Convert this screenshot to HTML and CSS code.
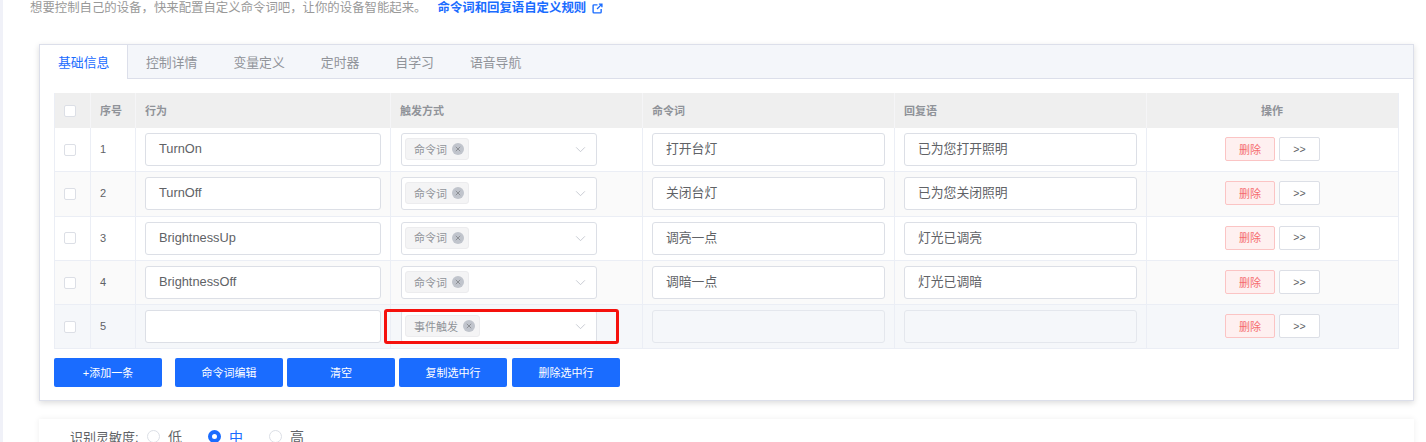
FILE: index.html
```html
<!DOCTYPE html>
<html lang="zh">
<head>
<meta charset="utf-8">
<title>自定义命令词</title>
<link rel="stylesheet" href="styles.css">
</head>
<body>
<main class="page">
  <p class="intro">想要控制自己的设备，快来配置自定义命令词吧，让你的设备智能起来。<a class="rule-link">命令词和回复语自定义规则<svg class="ext" viewBox="0 0 12 12" width="12" height="12"><path d="M6 2H2.2A1 1 0 0 0 1.2 3v6.8a1 1 0 0 0 1 1H9a1 1 0 0 0 1-1V6.5" fill="none" stroke="currentColor" stroke-width="1.5"/><path d="M5.5 6.5 10.5 1.5M7.5 1.2h3.3v3.3" fill="none" stroke="currentColor" stroke-width="1.5"/></svg></a></p>
  <section class="card">
    <nav class="tabs">
      <span class="tab active">基础信息</span>
      <span class="tab">控制详情</span>
      <span class="tab">变量定义</span>
      <span class="tab">定时器</span>
      <span class="tab">自学习</span>
      <span class="tab">语音导航</span>
    </nav>
    <div class="card-body">
      <div class="grid">
        <div class="row head">
          <div class="cell"><span class="check"></span></div>
          <div class="cell">序号</div>
          <div class="cell">行为</div>
          <div class="cell">触发方式</div>
          <div class="cell">命令词</div>
          <div class="cell">回复语</div>
          <div class="cell center">操作</div>
        </div>
        <div class="row">
          <div class="cell"><span class="check"></span></div>
          <div class="cell num">1</div>
          <div class="cell"><div class="input">TurnOn</div></div>
          <div class="cell"><div class="select"><span class="tag">命令词<i class="x"><svg viewBox="0 0 12 12"><path d="M3.8 3.8l4.4 4.4M8.2 3.8l-4.4 4.4"/></svg></i></span><svg class="arrow" viewBox="0 0 12 8"><path d="M1 1.5l5 5 5-5"/></svg></div></div>
          <div class="cell"><div class="input">打开台灯</div></div>
          <div class="cell"><div class="input">已为您打开照明</div></div>
          <div class="cell center"><button class="del">删除</button><button class="more">&gt;&gt;</button></div>
        </div>
        <div class="row alt">
          <div class="cell"><span class="check"></span></div>
          <div class="cell num">2</div>
          <div class="cell"><div class="input">TurnOff</div></div>
          <div class="cell"><div class="select"><span class="tag">命令词<i class="x"><svg viewBox="0 0 12 12"><path d="M3.8 3.8l4.4 4.4M8.2 3.8l-4.4 4.4"/></svg></i></span><svg class="arrow" viewBox="0 0 12 8"><path d="M1 1.5l5 5 5-5"/></svg></div></div>
          <div class="cell"><div class="input">关闭台灯</div></div>
          <div class="cell"><div class="input">已为您关闭照明</div></div>
          <div class="cell center"><button class="del">删除</button><button class="more">&gt;&gt;</button></div>
        </div>
        <div class="row">
          <div class="cell"><span class="check"></span></div>
          <div class="cell num">3</div>
          <div class="cell"><div class="input">BrightnessUp</div></div>
          <div class="cell"><div class="select"><span class="tag">命令词<i class="x"><svg viewBox="0 0 12 12"><path d="M3.8 3.8l4.4 4.4M8.2 3.8l-4.4 4.4"/></svg></i></span><svg class="arrow" viewBox="0 0 12 8"><path d="M1 1.5l5 5 5-5"/></svg></div></div>
          <div class="cell"><div class="input">调亮一点</div></div>
          <div class="cell"><div class="input">灯光已调亮</div></div>
          <div class="cell center"><button class="del">删除</button><button class="more">&gt;&gt;</button></div>
        </div>
        <div class="row alt">
          <div class="cell"><span class="check"></span></div>
          <div class="cell num">4</div>
          <div class="cell"><div class="input">BrightnessOff</div></div>
          <div class="cell"><div class="select"><span class="tag">命令词<i class="x"><svg viewBox="0 0 12 12"><path d="M3.8 3.8l4.4 4.4M8.2 3.8l-4.4 4.4"/></svg></i></span><svg class="arrow" viewBox="0 0 12 8"><path d="M1 1.5l5 5 5-5"/></svg></div></div>
          <div class="cell"><div class="input">调暗一点</div></div>
          <div class="cell"><div class="input">灯光已调暗</div></div>
          <div class="cell center"><button class="del">删除</button><button class="more">&gt;&gt;</button></div>
        </div>
        <div class="row hover">
          <div class="cell"><span class="check"></span></div>
          <div class="cell num">5</div>
          <div class="cell"><div class="input"></div></div>
          <div class="cell"><div class="select"><span class="tag">事件触发<i class="x"><svg viewBox="0 0 12 12"><path d="M3.8 3.8l4.4 4.4M8.2 3.8l-4.4 4.4"/></svg></i></span><svg class="arrow" viewBox="0 0 12 8"><path d="M1 1.5l5 5 5-5"/></svg></div><span class="redbox"></span></div>
          <div class="cell"><div class="input disabled"></div></div>
          <div class="cell"><div class="input disabled"></div></div>
          <div class="cell center"><button class="del">删除</button><button class="more">&gt;&gt;</button></div>
        </div>
      </div>
      <div class="actions">
        <button class="primary first">+添加一条</button>
        <button class="primary">命令词编辑</button>
        <button class="primary">清空</button>
        <button class="primary third">复制选中行</button>
        <button class="primary">删除选中行</button>
      </div>
    </div>
  </section>
  <section class="sens">
    <span class="sens-label">识别灵敏度:</span>
    <label class="radio"><i class="dot"></i>低</label>
    <label class="radio on"><i class="dot"></i>中</label>
    <label class="radio"><i class="dot"></i>高</label>
  </section>
</main>
</body>
</html>
```
FILE: styles.css
```css
* { box-sizing: border-box; }
html, body { margin: 0; height: 442px; overflow: hidden; background: #fff; }
body { font-family: "Liberation Sans", "Noto Sans CJK SC", sans-serif; color: #606266; }
.page { width: 1426px; height: 442px; border-left: 3px solid #f0f1f8; padding: 0 0 0 36px; overflow: hidden; }
.intro { margin: 0 0 0 -9px; height: 44px; padding-top: 1px; font-size: 12.4px; line-height: 15px; color: #999; white-space: nowrap; }
.rule-link { margin-left: 11px; color: #1a6cff; font-weight: 700; }
.ext { margin-left: 6px; vertical-align: -2px; width: 11px; height: 11px; }
.card { width: 1375px; height: 357px; background: #fff; border: 1px solid #dcdfea; box-shadow: 0 2px 6px rgba(0,0,0,.14); }
.tabs { display: flex; height: 34px; background: #f4f6fa; border-bottom: 1px solid #dcdfea; }
.tab { height: 34px; padding: 0 18px; font-size: 12.85px; line-height: 36px; color: #909399; }
.tab.active { width: 88px; padding: 0 0 0 18px; background: #fff; color: #1a6cff; border-right: 1px solid #dcdfea; }
.card-body { padding: 14px 14px 0; }
.grid { width: 1345px; border-left: 1px solid #ebeef5; border-right: 1px solid #ebeef5; }
.row { display: grid; grid-template-columns: 36px 45px 255px 252px 252px 252px 1fr; height: 44.3px; border-bottom: 1px solid #ebeef5; align-items: stretch; }
.row.head { height: 35px; background: #efefef; border-bottom: 0; font-size: 10.5px; font-weight: 700; color: #909399; }
.row.alt { background: #fafafa; }
.row.hover { background: #f5f7fa; }
.cell { position: relative; display: flex; align-items: center; padding: 0 9px; border-right: 1px solid #ebeef5; font-size: 11px; min-width: 0; }
.cell:last-child { border-right: 0; }
.cell.center { justify-content: center; }
.head .cell { border-right-color: #f5f5f7; padding: 0 10px 2px 9px; }
.head .cell:first-child, .row .cell:first-child { padding-bottom: 0; }
.num { color: #606266; padding-bottom: 1px; }
.check { display: block; width: 12px; height: 12px; background: #fff; border: 1px solid #dcdfe6; border-radius: 2px; }
.input { width: 100%; height: 33px; padding: 0 13px; background: #fff; border: 1px solid #dcdfe6; border-radius: 3px; font-size: 12.8px; line-height: 30px; color: #606266; white-space: nowrap; }
.input.disabled { background: #f5f7fa; border-color: #e4e7ed; }
.select { display: flex; align-items: center; justify-content: space-between; width: 196px; height: 33px; margin-left: 1px; padding: 0 10px 0 3px; background: #fff; border: 1px solid #dcdfe6; border-radius: 3px; }
.tag { display: flex; align-items: center; height: 22px; margin-bottom: 1px; padding: 0 4px 1px 8px; background: #f4f4f5; border: 1px solid #ececee; border-radius: 3px; font-size: 11px; color: #909399; white-space: nowrap; }
.x { display: block; width: 12px; height: 12px; margin: 1px 0 0 5px; border-radius: 50%; background: #c0c4cc; }
.x svg { display: block; width: 12px; height: 12px; fill: none; stroke: #8d9095; stroke-width: 1; }
.arrow { width: 11px; height: 7px; fill: none; stroke: #c0c4cc; stroke-width: 1; }
button { font-family: inherit; cursor: pointer; }
.del { width: 50px; height: 24px; margin-bottom: 1px; padding: 0 0 1px; background: #fef0f0; border: 1px solid #fbc4c4; border-radius: 2px; color: #f56c6c; font-size: 11px; }
.more { width: 41px; height: 24px; margin: 0 0 1px 4px; padding: 0 0 1px; background: #fff; border: 1px solid #dcdfe6; border-radius: 2px; color: #606266; font-size: 10.5px; }
.redbox { position: absolute; left: -7px; top: 4px; width: 235px; height: 35px; border: 3px solid #f5110d; border-radius: 3px; }
.actions { display: flex; gap: 4px; margin-top: 8.5px; }
.primary { width: 108px; height: 29px; padding: 0; background: #1a6cff; border: 0; border-radius: 2px; color: #fff; font-size: 11px; }
.primary.first { margin-right: 9px; }
.primary.third { margin-right: 1px; }
.sens { display: flex; align-items: center; width: 1375px; height: 40px; margin-top: 18px; padding: 0 0 6px 31px; background: #fff; box-shadow: 0 0 6px rgba(0,0,0,.07); font-size: 13px; color: #606266; }
.sens-label { width: 77px; }
.radio { display: flex; align-items: center; width: 61px; font-size: 14px; color: #606266; }
.radio .dot { display: block; width: 13px; height: 13px; margin-right: 8px; border: 1px solid #dcdfe6; border-radius: 50%; background: #fff; }
.radio.on { color: #1a6cff; }
.radio.on .dot { border: 4px solid #1a6cff; }
```
